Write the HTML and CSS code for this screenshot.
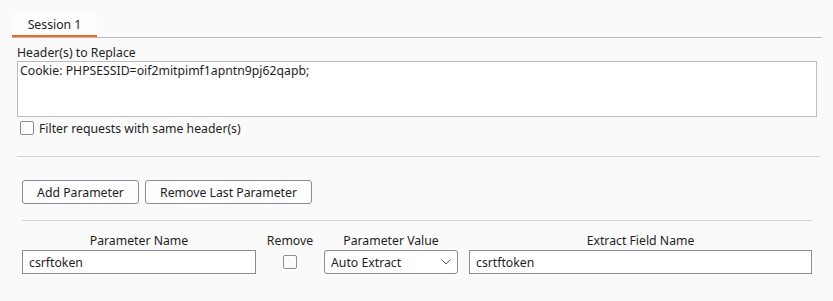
FILE: index.html
```html
<!DOCTYPE html>
<html>
<head>
<meta charset="utf-8">
<link rel="stylesheet" href="styles.css">
</head>
<body>
<div class="page">
  <div class="tabbar">
    <div class="tab">Session 1</div>
  </div>
  <div class="section">
    <div class="label">Header(s) to Replace</div>
    <div class="textarea">Cookie: PHPSESSID=oif2mitpimf1apntn9pj62qapb;</div>
    <label class="check-row"><span class="checkbox"></span><span>Filter requests with same header(s)</span></label>
    <div class="rule"></div>
  </div>
  <div class="params">
    <div class="buttons">
      <button class="btn">Add Parameter</button>
      <button class="btn">Remove Last Parameter</button>
    </div>
    <div class="rule2"></div>
    <div class="grid">
      <div class="head">Parameter Name</div>
      <div class="head">Remove</div>
      <div class="head">Parameter Value</div>
      <div class="head">Extract Field Name</div>
      <div class="field">csrftoken</div>
      <div class="cell-center"><span class="checkbox"></span></div>
      <div class="select"><span>Auto Extract</span>
        <svg width="10" height="6" viewBox="0 0 10 6"><path d="M0.5 0.5 L5 5 L9.5 0.5" fill="none" stroke="#555" stroke-width="1"/></svg>
      </div>
      <div class="field">csrtftoken</div>
    </div>
  </div>
</div>
</body>
</html>
```
FILE: styles.css
```css
* { box-sizing: border-box; }
html, body { margin: 0; padding: 0; }
body {
  background: #fafafa;
  font-family: "Noto Sans", "Open Sans", sans-serif;
  font-size: 12.25px;
  color: #1e1e1e;
  width: 833px;
  height: 301px;
  overflow: hidden;
}
.page { padding-top: 13px; }
.tabbar {
  margin: 0 11px 0 12px;
  border-bottom: 1px solid #bcbcbc;
  display: flex;
}
.tab {
  width: 85px;
  height: 24px;
  background: #fdfdfd;
  border-bottom: 2px solid #f26522;
  display: flex;
  align-items: center;
  justify-content: center;
  padding-top: 1px;
}
.section {
  padding: 7px 13px 0 17px;
}
.label { line-height: 16px; height: 16px; }
.textarea {
  margin-top: 0px;
  margin-right: 3px;
  height: 56px;
  background: #fff;
  border: 1px solid #bcbcbc;
  padding: 1px 2px;
  line-height: 16px;
}
.check-row {
  display: flex;
  align-items: center;
  gap: 5px;
  margin-top: 4px;
  padding-left: 3px;
  height: 14px;
}
.checkbox {
  display: inline-block;
  width: 14px;
  height: 14px;
  border: 1px solid #8e8e8e;
  border-radius: 2px;
  background: #fbfbfb;
}
.rule {
  margin-top: 21px;
  border-top: 1px solid #d4d4d4;
}
.params {
  padding: 23px 21px 0 22px;
}
.buttons { display: flex; gap: 6px; }
.btn {
  font: inherit;
  color: #1e1e1e;
  height: 24px;
  padding: 0 14px;
  background: #fdfdfd;
  border: 1px solid #8b8b9c;
  border-radius: 3px;
}
.btn:first-child { width: 117px; }
.btn:last-child { width: 167px; }
.rule2 {
  margin-top: 16px;
  border-top: 1px solid #d4d4d4;
}
.grid {
  margin-top: 12px;
  display: grid;
  grid-template-columns: 234px 48px 134px 1fr;
  column-gap: 10px;
  row-gap: 1px;
}
.grid > :nth-child(4), .grid > :nth-child(8) { margin-left: 1px; }
.head { text-align: center; line-height: 16px; }
.field, .select {
  height: 24px;
  background: #fff;
  border: 1px solid #8b8b9c;
  display: flex;
  align-items: center;
  padding: 0 6px;
}
.select {
  border-radius: 3px;
  justify-content: space-between;
  padding-right: 6px;
}
.cell-center { display: flex; justify-content: center; align-items: center; }
```
